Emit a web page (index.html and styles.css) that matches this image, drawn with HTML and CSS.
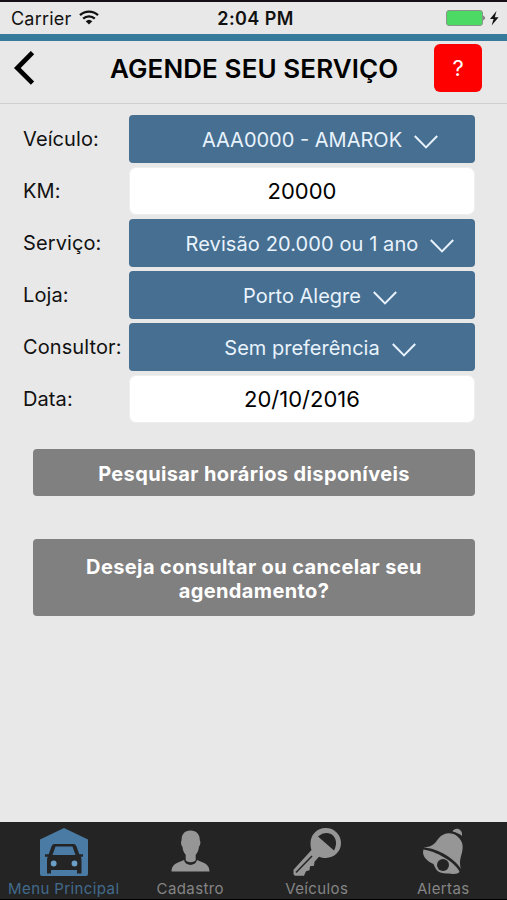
FILE: index.html
```html
<!DOCTYPE html>
<html lang="pt-BR">
<head>
<meta charset="UTF-8">
<title>Agende seu serviço</title>
<link rel="stylesheet" href="styles.css">
</head>
<body>
<div class="status-bar">
    <div class="carrier">
        <span>Carrier</span>
        <svg width="20" height="15" viewBox="0 0 20 15" fill="none" stroke="#111" stroke-width="2.3">
            <path d="M1 5.2a13 13 0 0 1 18 0M4.2 8.6a8.4 8.4 0 0 1 11.6 0"/>
            <path d="M6.7 11.2a4.8 4.8 0 0 1 6.6 0L10 14.6z" fill="#111" stroke="none"/>
        </svg>
    </div>
    <div class="time">2:04 PM</div>
    <div class="battery">
        <svg width="54" height="18" viewBox="0 0 54 18">
            <rect x="0.5" y="1.5" width="36" height="15" rx="2.5" fill="#4cd964" stroke="#8b948b"/>
            <path d="M37.5 6.5q2.2 2.5 0 5z" fill="#222"/>
            <path d="M50.5 2l-6.5 8h3.6l-2 6.5 7-8.300h-3.800z" fill="#111"/>
        </svg>
    </div>
</div>
<div class="header">
    <a class="back" href="#">
        <svg width="23" height="34" viewBox="0 0 23 34" fill="none" stroke="#000" stroke-width="4.7"><path d="M19.5 1.6L4.3 17 19.5 32.2"/></svg>
    </a>
    <h1>AGENDE SEU SERVIÇO</h1>
    <button class="help">?</button>
</div>
<div class="form">
    <label>Veículo:</label>
    <div class="field select"><span>AAA0000 - AMAROK</span><svg class="chevron" viewBox="0 0 24 14"><path d="M.8 1L12 12.4 23.2 1"/></svg></div>
    <label>KM:</label>
    <div class="field input">20000</div>
    <label>Serviço:</label>
    <div class="field select"><span class="service">Revisão 20.000 ou 1 ano</span><svg class="chevron" viewBox="0 0 24 14"><path d="M.8 1L12 12.4 23.2 1"/></svg></div>
    <label>Loja:</label>
    <div class="field select"><span>Porto Alegre</span><svg class="chevron" viewBox="0 0 24 14"><path d="M.8 1L12 12.4 23.2 1"/></svg></div>
    <label>Consultor:</label>
    <div class="field select"><span>Sem preferência</span><svg class="chevron" viewBox="0 0 24 14"><path d="M.8 1L12 12.4 23.2 1"/></svg></div>
    <label>Data:</label>
    <div class="field input">20/10/2016</div>
</div>
<div class="actions">
    <button class="search">Pesquisar horários disponíveis</button>
    <button class="cancel">Deseja consultar ou cancelar seu<br>agendamento?</button>
</div>
<div class="tabs">
    <div class="tab active">
        <svg width="48" height="50" viewBox="0 0 48 50">
            <path d="M24 0l24 11.5V46q0 2-2 2H2q-2 0-2-2V11.5z" fill="#4a7ba5"/>
            <path d="M14.5 16h19q2 0 2.8 2l3 8.2h3.7v2.6h-2.2q.7 1.6.7 4.2v12.500h-4.500V42h-26v3.500H7V33q0-2.600.7-4.200H5v-2.600h3.700l3-8.200q.8-2 2.800-2z" fill="#242424"/>
            <path d="M15.500 18.500h17l3 8.500h-23z" fill="#4a7ba5"/>
            <circle cx="13.700" cy="35.500" r="2.900" fill="#6c9fc8"/>
            <circle cx="34.500" cy="35.500" r="2.900" fill="#6c9fc8"/>
        </svg>
        <span>Menu Principal</span>
    </div>
    <div class="tab">
        <svg width="48" height="50" viewBox="0 0 48 50">
            <path d="M24.500 2.500c6 0 9.500 4 9.300 9.700.9 1 .8 5-.8 6.500-.5 4-1.500 6-3.300 8v5c0 3.300-10 3.300-10 0v-5c-1.800-2-2.800-4-3.300-8-1.500-1.500-1.700-5.500-.8-6.500C15.400 6.500 18.500 2.500 24.500 2.500z"/>
            <path d="M18 32c1.500 6.500 11.500 6.500 13 0l6 2.500c4.500 2 6.200 4 6.500 9H5.500c.3-5 2-7 6.500-9z"/>
        </svg>
        <span>Cadastro</span>
    </div>
    <div class="tab">
        <svg width="48" height="50" viewBox="0 0 48 50">
            <path fill-rule="evenodd" d="M33 0a15 15 0 0 1 0 30c-3 0-5-.2-7-1.200l-4.500 5-.5 4-4 .5-.5 4-3.500 1-2 4.500H2l-1.500-1.500v-4.500L18.500 22c-.7-2-1-4-1-7A15 15 0 0 1 33 0zM25 8.500L41 22.500C48 9 35.500-.5 25 8.500z"/>
            <path d="M3 44.500L19 28" fill="none" stroke="#242424" stroke-width="1.500"/>
        </svg>
        <span>Veículos</span>
    </div>
    <div class="tab">
        <svg width="48" height="50" viewBox="0 0 48 50">
            <path d="M33.500 3.500c2-4.500 9-3 9.500 2v2.500c-2-2-5.500-3.500-9.500-4.500z"/>
            <path d="M4.500 19.500c10-1 11-4 15-9 6-7 14-6 19-2 6 5 6 11 4 18-1.500 5-2.200 9-.5 14.500C36 31 19 20 4.500 19.500z"/>
            <path d="M4.500 21.500C16 23 35 33 40.500 43.500c-1 3-7 2.700-11 2C19 46 17 42 14.500 36 7 33 2.500 27 4.500 21.500z"/>
            <circle cx="24" cy="37" r="6" fill="#242424"/>
        </svg>
        <span>Alertas</span>
    </div>
</div>
</body>
</html>
```
FILE: styles.css
```css
* {
    box-sizing: border-box;
}
body {
    margin: 0;
    height: 900px;
    display: flex;
    flex-direction: column;
    background-color: #e8e8e8;
    font-family: Inter, "Liberation Sans", sans-serif;
    color: #111;
    overflow: hidden;
}
button {
    border: 0;
    font-family: inherit;
    color: #fff;
    padding: 0;
}
.status-bar {
    height: 34px;
    border-top: 2px solid #151015;
    display: grid;
    grid-template-columns: 1fr 1fr 1fr;
    align-items: center;
    padding: 0 7px 0 11px;
    font-size: 18px;
}
.carrier {
    display: flex;
    align-items: center;
    gap: 8px;
    letter-spacing: 0.2px;
}
.carrier svg {
    margin-top: -2px;
}
.time {
    text-align: center;
    font-weight: 600;
    letter-spacing: 0.4px;
}
.battery {
    display: flex;
    justify-content: flex-end;
}
.header {
    height: 70px;
    border-top: 7px solid #367a9c;
    border-bottom: 1px solid #cfcfcf;
    display: flex;
    align-items: center;
    padding: 0 25px 8px 13px;
}
.back {
    display: flex;
    width: 97px;
}
h1 {
    flex: 1;
    margin: 0;
    font-size: 26px;
    font-weight: 600;
    letter-spacing: 0.1px;
    color: #000;
    white-space: nowrap;
}
.help {
    width: 48px;
    height: 48px;
    border-radius: 6px;
    background-color: #f00;
    font-size: 22px;
}
.form {
    display: grid;
    grid-template-columns: 106px 346px;
    grid-auto-rows: 48px;
    row-gap: 4.1px;
    padding: 11px 0 0 23px;
}
label {
    font-size: 20px;
    line-height: 49px;
    letter-spacing: 0.1px;
    white-space: nowrap;
}
.field {
    display: flex;
    align-items: center;
    justify-content: center;
    font-size: 20px;
    white-space: nowrap;
}
.select {
    background-color: #466f91;
    color: #e9f3fd;
    border-radius: 4px;
    padding: 1px 0 0 36px;
    gap: 12px;
}
.service {
    letter-spacing: 0.1px;
}
.input {
    background-color: #fff;
    color: #000;
    border: 1px solid #efefef;
    border-radius: 7px;
    font-size: 22px;
}
.chevron {
    width: 24px;
    height: 14px;
    margin-top: 5px;
    fill: none;
    stroke: #e9f3fd;
    stroke-width: 2;
}
.actions {
    display: flex;
    flex-direction: column;
    gap: 43px;
    padding: 26px 32px 0 33px;
}
.actions button {
    background-color: #808080;
    border-radius: 4px;
    padding-top: 2px;
    font-size: 20px;
    font-weight: 700;
    letter-spacing: 0.38px;
    line-height: 24px;
}
.search {
    height: 47px;
}
.cancel {
    height: 77px;
}
.tabs {
    margin-top: auto;
    height: 78px;
    background-color: #242424;
    border-bottom: 1px solid #000;
    display: grid;
    grid-template-columns: repeat(4, 126.5px);
    padding-left: 0.5px;
    color: #858585;
}
.tab {
    display: flex;
    flex-direction: column;
    align-items: center;
    padding-top: 6px;
    font-size: 15px;
    line-height: 21px;
    letter-spacing: 0.4px;
}
.tab svg {
    fill: #969696;
}
.active {
    color: #426b8d;
}
```
